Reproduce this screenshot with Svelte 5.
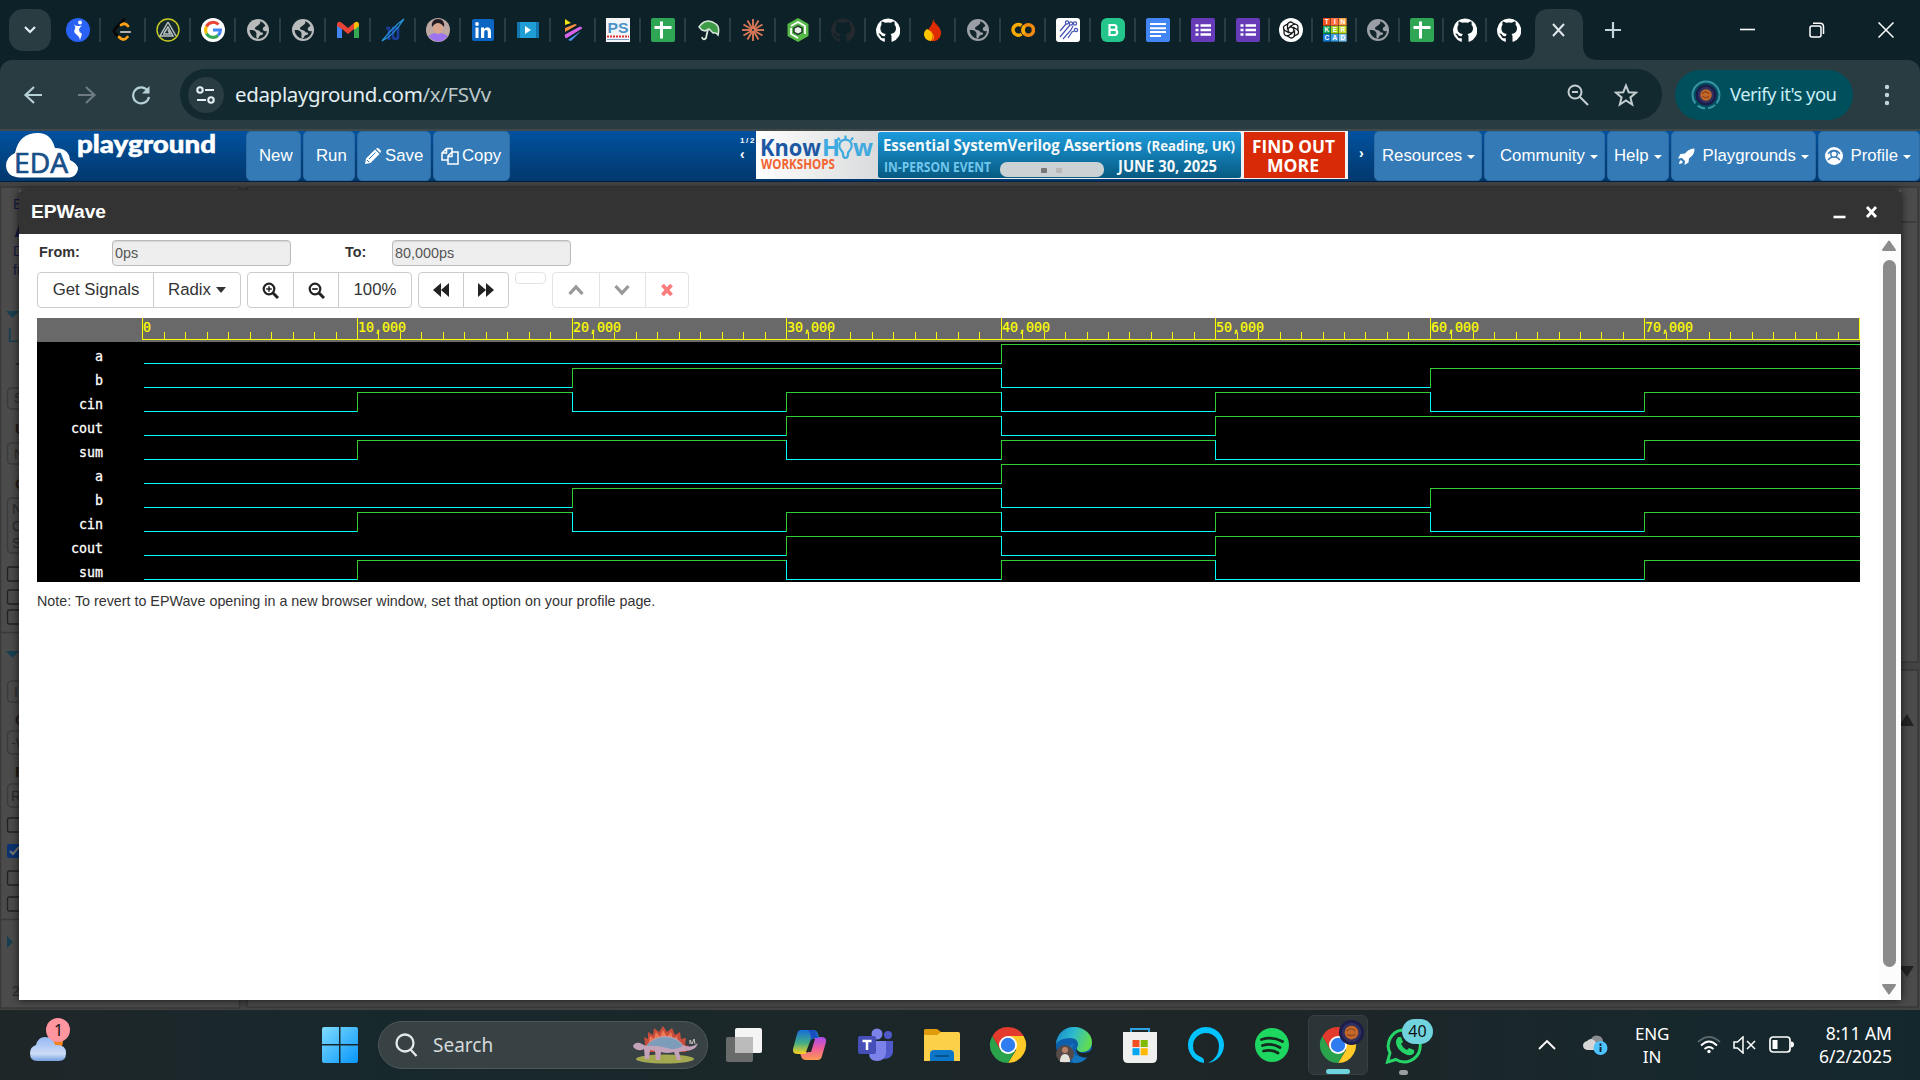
<script>
  const tabs = ['swoosh', 'leet', 'tri', 'google', 'globe', 'globe', 'gmail', 'ten', 'face', 'linkedin', 'video', 'stripes', 'ps', 'sheet', 'umbrella', 'burst', 'hex', 'ghdark', 'github', 'flame', 'globe2', 'colab', 'circuit', 'bold', 'docs', 'forms', 'forms', 'gpt', 'tinker', 'globe2', 'sheet', 'github', 'github'];

  // Each signal starts low and toggles at the listed periods.
  const group = [
    { name: 'a', at: [4] },
    { name: 'b', at: [2, 4, 6] },
    { name: 'cin', at: [1, 2, 3, 4, 5, 6, 7] },
    { name: 'cout', at: [3, 4, 5] },
    { name: 'sum', at: [1, 3, 4, 5, 7] }
  ];
  const signals = [...group, ...group];
  const originX = 105.4;
  const period = 214.57;
  const px = (t) => Math.round(originX + t * period) + 0.5;

  function segments(signal, row) {
    const hi = 24 + row * 24 + 2.5;
    const lo = hi + 19;
    const edges = [0, ...signal.at, 8];
    const out = [];
    for (let i = 0; i < edges.length - 1; i++) {
      const high = i % 2 === 1;
      const y = high ? hi : lo;
      const x1 = i === 0 ? px(0) + 1.5 : px(edges[i]);
      if (i > 0) out.push({ high, d: `M${x1} ${hi - 0.5}V${lo + 0.5}` });
      out.push({ high, d: `M${x1} ${y}H${px(edges[i + 1])}` });
    }
    return out;
  }
  const waves = signals.flatMap(segments);
  const majors = [0, 1, 2, 3, 4, 5, 6, 7];
  const ticks = Array.from({ length: 80 }, (_, i) => i / 10).filter((t) => t % 1 !== 0);
  const rays = Array.from({ length: 12 }, (_, i) => i * 30);
  const petals = [0, 60, 120, 180, 240, 300];
  const tinkerRows = [
    { y: 0, text: 'TIN', c: ['#f4511e', '#ff7043', '#ff9f43'] },
    { y: 8, text: 'KER', c: ['#16a35a', '#9ccc1c', '#c0d62c'] },
    { y: 16, text: 'CAD', c: ['#1477d1', '#3f9be0', '#86c5ee'] }
  ];
</script>

{#snippet chrome()}
  <path fill="#ffc928" d="M18 9h15.600A18 18 0 0 1 18 36l8-13z" />
  <path fill="#2ba24c" d="M2.400 9A18 18 0 0 0 18 36l8-13.500-15.800 0z" />
  <path fill="#e33b2e" d="M2.400 9A18 18 0 0 1 33.600 9H18L10.200 22.500z" />
  <circle cx="18" cy="18" r="9" fill="#fff" /><circle cx="18" cy="18" r="7.200" fill="#2f7cf0" />
{/snippet}

{#snippet planet(r)}
  <circle r={r} fill="#1b1c4b" /><circle r={r * 0.78} fill="#30305f" />
  <circle r={r * 0.55} fill="#c4682a" /><path d="M{-r * 0.4} {-r * 0.1}q{r * 0.4} {-r * 0.4} {r * 0.7} 0M{-r * 0.35} {r * 0.15}q{r * 0.4} {r * 0.2} {r * 0.65} 0" stroke="#8a431b" stroke-width="1.200" fill="none" />
{/snippet}

{#snippet favicon(name)}
  <svg class="fav" viewBox="0 0 24 24">
    {#if name === 'swoosh'}
      <circle cx="12" cy="12" r="12" fill="#2962f5" />
      <circle cx="14" cy="4.500" r="2" fill="#fff" /><path d="M8 6.500q2.500 2.500 8 1-3 2.500-3 4.500t3 4l-2 6q-1-4-4-6t-1-5q1-2-1-4.500z" fill="#fff" />
    {:else if name === 'leet'}
      <path d="M13 1.500 4 11q-2 2 0 4l3 3.500" fill="none" stroke="#080808" stroke-width="2.800" stroke-linecap="round" />
      <path d="M10 7q4-3 7 1M8 19q4.500 5 8.500 0" fill="none" stroke="#ffa116" stroke-width="2.800" stroke-linecap="round" />
      <path d="M10 14h9" stroke="#b3b3b3" stroke-width="2.200" stroke-linecap="round" />
    {:else if name === 'tri'}
      <circle cx="12" cy="12" r="11" fill="#15282c" stroke="#c9cc22" stroke-width="1.400" />
      <path d="M12 4 4 18h13L12 9l-4 6M12 4l8 14M12 12l2 4H7" fill="none" stroke="#b9c1c2" stroke-width="1.500" />
    {:else if name === 'google'}
      <circle cx="12" cy="12" r="12" fill="#fff" />
      <path d="M17.500 6.500A7.500 7.500 0 0 0 5.500 8.500" fill="none" stroke="#ea4335" stroke-width="3" />
      <path d="M5.500 8.500a7.500 7.500 0 0 0 0 7" fill="none" stroke="#fbbc05" stroke-width="3" />
      <path d="M5.500 15.500a7.500 7.500 0 0 0 11.500 2" fill="none" stroke="#34a853" stroke-width="3" />
      <path d="M17 17.500a7.500 7.500 0 0 0 2.500-5.500H12" fill="none" stroke="#4285f4" stroke-width="3" />
    {:else if name === 'globe' || name === 'globe2'}
      <circle cx="12" cy="12" r="11" fill={name === 'globe' ? '#b9babb' : '#9aa0a6'} />
      <path d="M14 3.500c1 2-1 3-2 4s-3 1-3 3 4 1 5 3 3 0 3 2-2 1-3 2-1 2-2 3A8.600 8.600 0 0 1 3.600 12h3q4 1 4 4-1 3 1 5h1a9 9 0 0 0 8.400-8c-3 1-5-1-4-3s3-1 2-3a9 9 0 0 0-4-3.500z" fill="#13262b" />
    {:else if name === 'gmail'}
      <path d="M1 20V7l5 4v9z" fill="#4285f4" /><path d="M18 20v-9l5-4v13z" fill="#34a853" />
      <path d="M1 8V6q1-4 5-1l6 5 6-5v6l-6 5-6-5-5-3z" fill="#ea4335" /><path d="M18 5q4-3 5 1v2l-5 4z" fill="#fbbc05" />
    {:else if name === 'ten'}
      <path d="M5 10h3v12M12 10h5v9q0 3-5 1z" fill="none" stroke="#1a3d9c" stroke-width="2.600" /><path d="M1 23Q12 18 23 1 12 9 1 23z" stroke="#2794da" fill="none" stroke-width="1.300" />
    {:else if name === 'face'}
      <circle cx="12" cy="12" r="12" fill="#bda9a2" /><path d="M2 18q10-7 20 0-9 11-20 0z" fill="#9b74ee" /><ellipse cx="12" cy="10" rx="5" ry="6" fill="#d9a78f" /><path d="M6 9q-1-8 6-8t6 8q-3-4-6-4T6 9z" fill="#231c22" />
    {:else if name === 'linkedin'}
      <rect x="1" y="1" width="22" height="22" rx="2" fill="#0a66c2" />
      <path d="M4.500 9.500h3V20h-3zM10 9.500h3v1.500q3-3 5.500-1 1.500 1 1.500 4v6h-3.200v-6q0-2-1.800-2t-1.800 2v6H10z" fill="#fff" /><circle cx="6" cy="6" r="1.900" fill="#fff" />
    {:else if name === 'video'}
      <path d="M1 4h22v16H1z" fill="#1377ad" /><path d="M4 4h16v16H4z" fill="#1f9ed5" /><path d="M9 8v8l6-4z" fill="#fff" />
    {:else if name === 'stripes'}
      <path d="M4 1v6l6-2z" fill="#f4e313" /><path d="M4 10 14 6l2 1L4 14z" fill="#ff9042" /><path d="m4 17 15-8 2 1L5 20z" fill="#d765ec" stroke="#d765ec" /><path d="m7 22 13-9-10 10z" fill="#4a98f5" />
    {:else if name === 'ps'}
      <rect width="24" height="24" fill="#f3f5f8" /><text x="12" y="14.500" text-anchor="middle" textLength="21" lengthAdjust="spacingAndGlyphs" class="ps">PS</text><path d="M1 18.500h22" stroke="#e03232" stroke-width="2" stroke-dasharray="2 1" /><path d="M1 21.500h22" stroke="#7d9fc6" />
    {:else if name === 'sheet'}
      <rect width="24" height="24" rx="2" fill="#2fa653" /><path d="M3.500 9.500h17M10.500 3.500v17" stroke="#fff" stroke-width="3" />
    {:else if name === 'umbrella'}
      <path d="M3 9q7-10 17-3 4 3 2 11-2-3-5-2l-4-4-4 2-3-1z" fill="#3d9b46" stroke="#dce9dc" stroke-width="1.500" /><path d="m12 11-2 9q-3 3-4-1" fill="none" stroke="#dce9dc" stroke-width="1.800" />
    {:else if name === 'burst'}
      {#each rays as r}<path d="M12 11V1" stroke="#d97757" stroke-width="1.900" transform="rotate({r} 12 12)" />{/each}
    {:else if name === 'hex'}
      <path d="m12 0 10.500 6v12L12 24 1.500 18V6z" fill="#57b947" /><path d="m5 8 7-4 7 4v8M5 10v6l7 4" fill="none" stroke="#fff" stroke-width="1.800" /><path d="m12 8 4 2.200v4.200L12 16.500 8 14.400v-4.200z" fill="#e9efe9" stroke="#20372c" stroke-width="1.500" />
    {:else if name === 'github' || name === 'ghdark'}
      <path fill={name === 'github' ? '#fff' : '#24292e'} d="M12 .5a12 12 0 0 0-4 23.300c.6.100.8-.3.800-.6v-3c-3 .6-4-.9-4.400-2-.3-.7-1-1.600-1.600-2-.5-.3-.3-.7.300-.7 1.400 0 2.100 1.500 2.600 2 1 1 2.300.8 3.200.4.100-.8.500-1.500 1-1.900-3-.4-5.500-1.500-5.500-6q0-2 1.200-3.200-.5-1.500.1-3.200c1 0 2.300.6 3.300 1.200q3-.8 6 0c1-.7 2.300-1.200 3.300-1.200q.7 1.700.2 3.200Q20 8 20 10c0 4.500-2.700 5.600-5.500 6 .7.600 1 1.500 1 2.600v4.600c0 .3.200.7.800.6A12 12 0 0 0 12 .5z" />
    {:else if name === 'flame'}
      <path d="M12 1c1 5 9 8 8 15-1 5-5 8-9 7-4-1-5-5-4-10 1-4 5-6 5-12z" fill="#dd2c00" /><path d="M6 11c4 2 8 5 4 12-4 0-7-3-7-7 0-2 1-4 3-5z" fill="#ffc400" /><path d="M8 12q6 5 3 11c2-1 3-4 1-7q-1-3-4-4z" fill="#ff9100" />
    {:else if name === 'colab'}
      <g fill="none" stroke-width="3.600"><path d="M10.500 7.600a5.300 5.300 0 1 0 0 8.500" stroke="#f9ab00" /><circle cx="17.300" cy="12" r="5.200" stroke="#f08a10" /><path d="M13.500 8.300a5.200 5.200 0 0 0 0 7.400" stroke="#f9ab00" /></g>
    {:else if name === 'circuit'}
      <rect width="24" height="24" rx="3" fill="#fff" /><g fill="none" stroke="#4451b5" stroke-width="1.200"><path d="m4 13 6-7M4 19 14 7M7 21l8-9 2-4M12 20l4-6 2-1" /><circle cx="11" cy="4.500" r="1.600" /><circle cx="15" cy="5.500" r="1.600" /><circle cx="19" cy="5.500" r="1.600" /><circle cx="20" cy="12" r="1.600" /></g>
    {:else if name === 'bold'}
      <rect width="24" height="24" rx="6" fill="#25c68b" /><path d="M8.500 7h4.500q2.500 0 2.500 2.400T13 11.800H8.500zM8.500 11.800h5q2.700 0 2.700 2.500T13.500 17h-5z" fill="none" stroke="#fff" stroke-width="2.200" />
    {:else if name === 'docs'}
      <rect width="24" height="24" rx="2" fill="#4285f4" /><path d="M4 6h16M4 10.200h16M4 14h16M4 18h11" stroke="#fff" stroke-width="2.100" />
    {:else if name === 'forms'}
      <rect width="24" height="24" rx="2" fill="#673ab7" /><path d="M4.500 7.500h3M4.500 12h3M4.500 16.500h3M9.500 7.500H20M9.500 12H20M9.500 16.500H20" stroke="#fff" stroke-width="2.500" />
    {:else if name === 'gpt'}
      <circle cx="12" cy="12" r="12" fill="#fff" /><g fill="none" stroke="#161616" stroke-width="1.300">{#each petals as r}<path d="M12 8.800 8.500 10.800V7a3 3 0 0 1 5-2.200l2.500 1.700" transform="rotate({r} 12 12)" />{/each}</g>
    {:else if name === 'tinker'}
      {#each tinkerRows as row}
        {#each row.c as c, i}
          <rect x={i * 8} y={row.y} width="7.600" height="7.600" fill={c} /><text x={i * 8 + 3.800} y={row.y + 6.300} text-anchor="middle" class="tk">{row.text[i]}</text>
        {/each}
      {/each}
    {/if}
  </svg>
{/snippet}

<div class="screen">
  <div class="tabstrip">
    <div class="tabsearch"><svg width="14" height="10" viewBox="0 0 14 10"><path d="m2 2 5 5 5-5" fill="none" stroke="#e3eff2" stroke-width="2.200" /></svg></div>
    {#each tabs as t, i}
      <div class="tab" class:narrow={i > 26} class:step={i === 26} class:last={i === 32}>{@render favicon(t)}</div>
    {/each}
    <div class="active">
      <svg width="78" height="51" viewBox="0 0 78 51"><path fill="#283c42" d="M0 51q15 0 15-15V14Q15 0 29 0h20q14 0 14 14v22q0 15 15 15z" /><path d="m33 15 11 12m0-12L33 27" stroke="#dfe9ec" stroke-width="2" /></svg>
    </div>
    <svg class="plus" width="16" height="16" viewBox="0 0 16 16"><path d="M8 0v16M0 8h16" stroke="#c2d5da" stroke-width="2.200" /></svg>
    <div class="wincontrols">
      <svg width="16" height="16" viewBox="0 0 16 16"><path d="M0 7.500h15" stroke="#fff" stroke-width="1.600" /></svg>
      <svg width="16" height="16" viewBox="0 0 16 16" fill="none" stroke="#fff" stroke-width="1.500"><rect x="1" y="4" width="11" height="11" rx="2" /><path d="M4 1.300h7q3.500 0 3.500 3.500V12" /></svg>
      <svg width="16" height="16" viewBox="0 0 16 16"><path d="m.5.5 15 15m0-15-15 15" stroke="#fff" stroke-width="1.500" /></svg>
    </div>
  </div>

  <div class="toolbar">
    <div class="nav">
      <svg width="20" height="20" viewBox="0 0 20 20"><path d="M19 10H3m8-8-8.500 8 8.500 8" fill="none" stroke="#b5d0d7" stroke-width="2.200" /></svg>
      <svg width="20" height="20" viewBox="0 0 20 20"><path d="M1 10h16M9 2l8.500 8L9 18" fill="none" stroke="#6f7d81" stroke-width="2.200" /></svg>
      <svg width="20" height="20" viewBox="0 0 20 20"><path d="M16.500 5.500A8 8 0 1 0 18 12" fill="none" stroke="#b5d0d7" stroke-width="2.200" /><path d="M18.500 1v7.500H11z" fill="#b5d0d7" /></svg>
    </div>
    <div class="omnibox">
      <div class="siteinfo"><svg width="20" height="18" viewBox="0 0 20 18" fill="none" stroke="#e3eff2" stroke-width="2.100"><circle cx="4" cy="4" r="2.700" /><path d="M9 4h9M1 14h9" /><circle cx="15" cy="14" r="2.700" /></svg></div>
      <span class="url">edaplayground.com<i>/x/FSVv</i></span>
      <svg class="mag" width="22" height="22" viewBox="0 0 22 22" fill="none" stroke="#c4ced1" stroke-width="2"><circle cx="8" cy="8" r="6.500" /><path d="m12.500 12.500 8.500 8.500M5 8h6" /></svg>
      <svg width="24" height="24" viewBox="0 0 24 24" fill="none" stroke="#c4ced1" stroke-width="2"><path d="m12 2.500 2.700 6.700 7.300.5-5.600 4.700 1.800 7.100-6.200-4-6.200 4 1.800-7.100L2 9.700l7.300-.5z" /></svg>
    </div>
    <div class="verify">
      <svg width="30" height="30" viewBox="-15 -15 30 30"><circle r="13.500" fill="none" stroke="#3a94a5" stroke-width="2" stroke-dasharray="9 2 8 3 8 3 51" />{@render planet(10.5)}</svg>
      <span>Verify it's you</span>
    </div>
    <svg width="6" height="22" viewBox="0 0 6 22" fill="#c2d5da"><circle cx="3" cy="3" r="2.200" /><circle cx="3" cy="11" r="2.200" /><circle cx="3" cy="19" r="2.200" /></svg>
  </div>

  <header class="eda">
    <svg class="logo" width="246" height="50" viewBox="0 0 246 50">
      <path fill="#fff" d="M20 46.500Q7 46 6 35q0-9 9-13Q19 2 38 2q13 0 17 15 14 0 15 12 8 4 8 9-1 7-8 8.500z" />
      <text x="14" y="42" textLength="54" lengthAdjust="spacingAndGlyphs" class="logo-eda">EDA</text>
      <text x="77" y="21.500" textLength="139" lengthAdjust="spacingAndGlyphs" class="logo-play">playground</text>
    </svg>
    <div class="btns">
      <button class="b-new">New</button><button class="b-run">Run</button>
      <button class="b-save"><svg width="16" height="16" viewBox="0 0 16 16" fill="#fff"><path d="m0 16 1-5.500L10 1.500 14.500 6l-9 9zM11 .8q1.500-1.500 3 0l1.200 1.200q1.500 1.500 0 3z" /><path d="m2 12 2.200 2.200M4 11l6.500-6.500" stroke="#337ab7" /></svg>Save</button>
      <button class="b-copy"><svg width="18" height="18" viewBox="0 0 18 18" fill="none" stroke="#fff" stroke-width="1.500"><path d="M6.500 13H1V6l4.500-4.500H11V5M1 6h4.500V1.500M7 9l4-4h6v12H7zM7 9.500h4V5" /></svg>Copy</button>
    </div>
    <div class="prev"><span>1 / 2</span><b>‹</b></div>
    <svg class="banner" width="592" height="48" viewBox="0 0 592 48">
      <defs>
        <linearGradient id="bb" x1="0" y1="0" x2="0" y2="1"><stop offset="0" stop-color="#1c9bdc" /><stop offset="1" stop-color="#075a82" /></linearGradient>
        <linearGradient id="bg" x1="0" y1="0" x2="1" y2="0"><stop offset="0" stop-color="#fff" /><stop offset="1" stop-color="#d9dadb" /></linearGradient>
      </defs>
      <rect width="592" height="48" fill="#f1f1f1" /><rect width="122" height="48" fill="url(#bg)" />
      <text x="4" y="24.500" textLength="61" lengthAdjust="spacingAndGlyphs" class="know" fill="#1d58a5">Know</text>
      <text x="66" y="24.500" textLength="18" lengthAdjust="spacingAndGlyphs" class="know" fill="#3eaadf">H</text>
      <path d="M87 23q0-2-2-4a6.200 6.200 0 1 1 9 0q-2 2-2 4 0 4-2.500 4T87 23zM89.500 4.500v3.500M82 6.500l2 3M97 6.500l-2 3" fill="none" stroke="#3eaadf" stroke-width="2.200" />
      <text x="97" y="24.500" textLength="20" lengthAdjust="spacingAndGlyphs" class="know" fill="#3eaadf">w</text>
      <text x="5" y="37.500" textLength="74" lengthAdjust="spacingAndGlyphs" class="wk">WORKSHOPS</text>
      <rect x="122" y="1" width="363" height="46" rx="2" fill="url(#bb)" />
      <text x="127" y="20" textLength="259" lengthAdjust="spacingAndGlyphs" class="b1">Essential SystemVerilog Assertions</text>
      <text x="391" y="20" textLength="88" lengthAdjust="spacingAndGlyphs" class="b2">(Reading, UK)</text>
      <text x="128" y="41" textLength="107" lengthAdjust="spacingAndGlyphs" class="b3">IN-PERSON EVENT</text>
      <text x="362" y="41" textLength="99" lengthAdjust="spacingAndGlyphs" class="b1">JUNE 30, 2025</text>
      <rect x="244" y="31" width="104" height="15" rx="7" fill="#ccd1d3" /><rect x="285" y="37" width="6" height="5" rx="1" fill="#777" /><rect x="300" y="37" width="6" height="5" rx="1" fill="#b8b8b8" />
      <rect x="488" y="1" width="101" height="46" fill="#d82a06" />
      <text x="496" y="22" textLength="83" lengthAdjust="spacingAndGlyphs" class="b4">FIND OUT</text><text x="511" y="41" textLength="52" lengthAdjust="spacingAndGlyphs" class="b4">MORE</text>
    </svg>
    <div class="next">›</div>
    <div class="btns">
      <button class="r1">Resources<em></em></button><button class="r2">Community<em></em></button><button class="r3">Help<em></em></button>
      <button class="r4"><svg width="17" height="17" viewBox="0 0 17 17" fill="#fff"><path d="M16.500.5q.5 6-5.500 10l-.5 4-4 2.500.5-4-3-3L0 10.500 2.500 6 7 5.500q4-5 9.500-5zM3 12l2 2q-1 2-4 2 0-3 2-4z" /></svg><span>Playgrounds</span><em></em></button>
      <button class="r5"><svg width="18" height="18" viewBox="0 0 18 18"><circle cx="9" cy="9" r="9" fill="#fff" /><circle cx="9" cy="7" r="3.200" fill="#fff" stroke="#337ab7" stroke-width="1.400" /><path d="M3.200 13q2-3 3.800-2.500M14.800 13q-2-3-3.800-2.500M3.200 7a6.500 6.500 0 0 1 11.600 0" fill="none" stroke="#337ab7" stroke-width="1.600" /></svg><span>Profile</span><em></em></button>
    </div>
  </header>

  <main class="page">
    <svg class="backdrop" width="1920" height="828" viewBox="0 182 1920 828">
      <rect y="182" width="1920" height="828" fill="#434343" />
      <g fill="#4b4b4b" stroke="#393939" stroke-width="1.500"><rect x=".5" y="187" width="239" height="821" /><rect x="247" y="187" width="1671" height="475" /><rect x="247" y="670" width="1671" height="337" /></g>
      <path d="M1890 222h26M0 632.500h40M0 919.500h40" stroke="#393939" stroke-width="1.500" />
      <g class="dimtext" fill="#151a3e"><text x="13" y="209">E</text><text x="14" y="237" class="big">A</text><text x="13" y="256">D</text><text x="13" y="275">fr</text></g>
      <g fill="#183f50"><path d="M6 311h13l-6.500 7zM6 651h13l-6.500 7zM7 936v12l6-6z" /><text x="7" y="342" class="lang">L</text></g>
      <g fill="none" stroke="#3b3b3b" stroke-width="1.400"><rect x="7.500" y="388" width="100" height="21" rx="4" /><rect x="7.500" y="443" width="100" height="21" rx="4" /><rect x="7.500" y="498" width="100" height="55" rx="4" /><rect x="7.500" y="681" width="100" height="21" rx="4" /><rect x="7.500" y="731" width="100" height="23" rx="4" /><rect x="7.500" y="784" width="100" height="23" rx="4" /></g>
      <g fill="none" stroke="#222" stroke-width="1.300">{#each [567, 590, 610, 818, 871, 897] as y}<rect x="7.500" {y} width="14" height="14" rx="2" />{/each}</g>
      <rect x="7" y="844" width="14" height="14" rx="2" fill="#0a3370" /><path d="m10 851 3 3 6-7" fill="none" stroke="#777" stroke-width="2" />
      <g class="dimtext" fill="#2a2a2a"><text x="14" y="403">S</text><text x="14" y="459">N</text><text x="12" y="514">N</text><text x="12" y="531">O</text><text x="12" y="548">S</text><text x="14" y="697">I</text><text x="11" y="748">-W</text><text x="11" y="801">R</text><text x="12" y="996">2</text></g>
      <g class="dimbold" fill="#251c18"><text x="16" y="373">T</text><text x="15" y="434">U</text><text x="15" y="489">O</text><text x="15" y="725">C</text><text x="15" y="777">R</text></g>
      <path d="m1899 726 8-12 7 12zM1899 966h15l-7 11z" fill="#222" />
    </svg>

    <section class="modal">
      <div class="mhead"><h1>EPWave</h1><svg width="46" height="16" viewBox="0 0 46 16" stroke="#fff" fill="none"><path d="M.5 13h12" stroke-width="2.600" /><path d="m34 3 9 10m0-10-9 10" stroke-width="2.800" /></svg></div>
      <div class="mbody">
        <div class="content">
          <div class="range"><label class="from" for="f">From:</label><div id="f" class="input">0ps</div><label class="to" for="t">To:</label><div id="t" class="input">80,000ps</div></div>
          <div class="tools">
            <div class="group g1"><span>Get Signals</span><span>Radix<em></em></span></div>
            <div class="group g2">
              <span><svg width="17" height="17" viewBox="0 0 17 17" fill="none" stroke="#222"><circle cx="7" cy="7" r="5.300" stroke-width="2.200" /><path d="m11 11 5 5" stroke-width="3" /><path d="M7 4.200v5.600M4.200 7h5.600" stroke-width="1.500" /></svg></span>
              <span><svg width="17" height="17" viewBox="0 0 17 17" fill="none" stroke="#222"><circle cx="7" cy="7" r="5.300" stroke-width="2.200" /><path d="m11 11 5 5" stroke-width="3" /><path d="M4.200 7h5.600" stroke-width="1.700" /></svg></span>
              <span>100%</span>
            </div>
            <div class="group g3">
              <span><svg width="16" height="14" viewBox="0 0 16 14" fill="#222"><path d="M8 0v14L0 7zM16 0v14L8 7z" /></svg></span>
              <span><svg width="16" height="14" viewBox="0 0 16 14" fill="#222"><path d="M0 0v14l8-7zM8 0v14l8-7z" /></svg></span>
            </div>
            <div class="empty"></div>
            <div class="group g4">
              <span><svg width="16" height="12" viewBox="0 0 16 12"><path d="m1.500 10 6.500-7 6.500 7" fill="none" stroke="#999" stroke-width="3.300" /></svg></span>
              <span><svg width="16" height="12" viewBox="0 0 16 12"><path d="m1.500 2 6.500 7 6.500-7" fill="none" stroke="#999" stroke-width="3.300" /></svg></span>
              <span><svg width="12" height="12" viewBox="0 0 12 12"><path d="m1.500 1 9 10m0-10-9 10" stroke="#fb7c7c" stroke-width="3.800" /></svg></span>
            </div>
          </div>
          <svg class="wave" width="1823" height="264" viewBox="0 0 1823 264">
            <rect width="1823" height="264" fill="#000" /><rect width="1823" height="24" fill="#696969" />
            <g stroke="#ff0" shape-rendering="crispEdges">
              <path d="M105 21.500H1823M1822.500 0v22" />
              {#each majors as t}<path d="M{px(t)} 0v22" />{/each}
              {#each ticks as t}<path d="M{px(t)} 14v8" />{/each}
            </g>
            {#each majors as t}<text x={px(t) + 0.5} y="14" class="tick">{t ? t + '0,000' : '0'}</text>{/each}
            {#each signals as s, i}<text x="66" y={42.6 + i * 24} text-anchor="end" class="sig">{s.name}</text>{/each}
            {#each waves as w}<path d={w.d} stroke={w.high ? '#32cd32' : '#00ffff'} shape-rendering="crispEdges" />{/each}
          </svg>
          <p>Note: To revert to EPWave opening in a new browser window, set that option on your profile page.</p>
        </div>
        <div class="scroll">
          <svg width="16" height="12" viewBox="0 0 16 12"><path d="m8 1.500 6 8.500H2z" fill="#8b8b8b" stroke="#8b8b8b" stroke-width="2" stroke-linejoin="round" /></svg>
          <div class="thumb"></div>
          <svg width="16" height="12" viewBox="0 0 16 12"><path d="M8 10.500 2 2h12z" fill="#8b8b8b" stroke="#8b8b8b" stroke-width="2" stroke-linejoin="round" /></svg>
        </div>
      </div>
    </section>
  </main>

  <footer class="taskbar">
    <div class="weather">
      <svg width="44" height="46" viewBox="0 0 44 46"><defs><linearGradient id="cl" x1="0" y1="0" x2="0" y2="1"><stop offset="0" stop-color="#94b7f3" /><stop offset=".7" stop-color="#ccdcf7" /><stop offset="1" stop-color="#769fe0" /></linearGradient></defs>
        <circle cx="27" cy="24" r="8" fill="#f58220" /><path d="M9 43q-7 0-7-8 0-6 6-8 2-8 9-8 8 0 10 8 11-1 11 8 0 8-7 8z" fill="url(#cl)" />
        <circle cx="30" cy="12" r="12" fill="#ff959e" /><text x="30.500" y="17.500" text-anchor="middle" class="badge1">1</text></svg>
    </div>
    <svg class="start" width="36" height="36" viewBox="0 0 36 36"><defs><linearGradient id="ws" x1="0" y1="0" x2="1" y2="1"><stop offset="0" stop-color="#7fdcff" /><stop offset="1" stop-color="#0795fa" /></linearGradient></defs><path fill="url(#ws)" d="M2 0h15v17H0V2q0-2 2-2zM18.500 0H34q2 0 2 2v15H18.500zM0 18.500h17V36H2q-2 0-2-2zM18.500 18.500H36V34q0 2-2 2H18.500z" /></svg>
    <div class="search">
      <svg width="23" height="24" viewBox="0 0 23 24" fill="none" stroke="#e5e9ea" stroke-width="2.300"><circle cx="10" cy="10" r="8.500" /><path d="m15.500 16.500 6 6.500" /></svg>
      <span>Search</span>
      <svg class="dino" width="68" height="38" viewBox="0 0 68 38">
        <ellipse cx="33" cy="33" rx="29" ry="4.500" fill="#a4a851" />
        <path d="m13 17-1-6 4 2 0-7 5 3 1-7 5 4 4-6 4 6 5-4 3 7 5-3 1 7 5-1-1 7 4 1-3 6H13z" fill="#c84d3c" /><path d="m17 16 1-6 4 3 2-7 4 5 3-7 4 7 4-5 2 7 4-3 1 7 3-1 0 6H17z" fill="#ed7b55" />
        <path d="M1 20q2-4 7-3l6 3q8-10 20-10 12 1 17 9 8 4 15-2-2 8-14 8l-5 1 2 8h-4l-3-8q-7 2-13 0l-1 8h-4l-1-9-5-1-1 9h-4l-1-10q-5 3-10-1z" fill="#c4a2b9" />
        <path d="M14 20q8-9 20-9 12 1 17 9-8 5-16 2-10-3-21-2z" fill="#7d9cb9" /><path d="m58 18 0-4 2 4 2-5 1 5" fill="none" stroke="#c9c3bd" />
      </svg>
    </div>
    <div class="apps">
      <div class="app"><svg viewBox="0 0 36 36"><rect x="9" y="1" width="27" height="25" rx="2" fill="#f4f4f4" /><rect y="10" width="27" height="25" rx="2" fill="#696b6b" /><path d="M9 10h18v16H9z" fill="#bababa" /></svg></div>
      <div class="app"><svg viewBox="0 0 36 36"><defs><linearGradient id="cp" x1="0" y1="0" x2="0" y2="1"><stop offset="0" stop-color="#176ddb" /><stop offset=".55" stop-color="#45ae83" /><stop offset="1" stop-color="#fbd21d" /></linearGradient><linearGradient id="cq" x1="0" y1="0" x2="0" y2="1"><stop offset="0" stop-color="#a74cf0" /><stop offset=".5" stop-color="#ef5e98" /><stop offset="1" stop-color="#fd9a52" /></linearGradient></defs>
        <path d="M26 33H14q-4 0-5-4l-1-3h5q4 0 5-4l3-8q1-4 5-4h3q6 0 5 5l-4 14q-1 4-4 4z" fill="url(#cq)" /><path d="M9 3h12q4 0 5 4l1 4h-3q-4 0-5 4l-3 8q-1 4-5 4H6q-6 0-5-5L5 7q1-4 4-4z" fill="url(#cp)" /><path d="M19 12h4l-4 13h-5z" fill="#1c2527" /><path d="M20 3q4 0 5 4l1 4h-3q-3 0-4 3 0-8-3-11z" fill="#1a4fc0" /></svg></div>
      <div class="app"><svg viewBox="0 0 36 36"><circle cx="19" cy="7" r="5.500" fill="#7b83eb" /><circle cx="30" cy="8" r="4" fill="#5059c9" /><path d="M25 14h10v11q-1 7-9 7z" fill="#5059c9" /><path d="M11 14h17v12q-1 8-9 8t-8-8z" fill="#7b83eb" /><rect y="9" width="18" height="18" rx="2" fill="#464eb8" /><path d="M4.500 14h9M9 14v9" stroke="#fff" stroke-width="2.500" /></svg></div>
      <div class="app"><svg viewBox="0 0 36 36"><path d="M0 3q0-1 2-1h11l4 3h18l1 5H0z" fill="#df9b0b" /><path d="M0 8h13l4-3h17q2 0 2 2v27H0z" fill="#fdd04a" /><path d="M6 34v-7q0-4 4-4h16q4 0 4 4v7z" fill="#0c76c9" /><path d="M11 29h14" stroke="#07518f" stroke-width="2" /></svg></div>
      <div class="app"><svg viewBox="0 0 36 36">{@render chrome()}</svg></div>
      <div class="app"><svg viewBox="0 0 36 36"><defs><linearGradient id="ed" x1="0" y1="0" x2="1" y2=".3"><stop offset="0" stop-color="#1683c8" /><stop offset=".5" stop-color="#2cb9d0" /><stop offset="1" stop-color="#5fdb55" /></linearGradient></defs><circle cx="18" cy="18" r="18" fill="#0d5fab" /><path d="M0 17C1 6 9 0 18 0c10 0 18 7 18 15 0 7-5 10-10 10-4 0-6-2-5-4 3-6-1-10-7-10Q4 11 0 17z" fill="url(#ed)" /><path d="M18 16q-5 12 6 14 5 1 9-2-6 9-15 8-9-7-6-16z" fill="#1575be" /><path d="M20 21q2 5 8 5 4 0 8-3l0-4 2 7-5 4q-4 1-7 0-6-2-6-9z" fill="#1c2426" /><circle cx="9" cy="27" r="9" fill="#554a48" /><path d="M4 35q0-8 5-8t5 8z" fill="#e4e0da" /><circle cx="9" cy="23" r="3" fill="#b8826a" /></svg></div>
      <div class="app"><svg viewBox="0 0 36 36"><path d="M9 6V2h18v4" fill="none" stroke="#2ba3e5" stroke-width="2" /><path d="M1 5h34v26q0 5-5 5H6q-5 0-5-5z" fill="#efefef" /><path d="M10.500 13h7v7h-7z" fill="#f25022" /><path d="M18.700 13h7v7h-7z" fill="#7fba00" /><path d="M10.500 21.200h7v7h-7z" fill="#00a4ef" /><path d="M18.700 21.200h7v7h-7z" fill="#ffb900" /></svg></div>
      <div class="app"><svg viewBox="0 0 36 36"><path fill-rule="evenodd" fill="#00c3ff" d="M16 35.900A18 18 0 1 1 20 35.900q11-5 11-17a13 13 0 0 0-26 0q0 8 8 11 3 1 3 4z" /></svg></div>
      <div class="app"><svg viewBox="0 0 36 36"><circle cx="18" cy="18" r="17" fill="#1ed760" /><path d="M7.500 12.500q11-3.500 21 2M8.500 18.500q9-3 17.500 2M9.500 24q8-2 14.500 2" fill="none" stroke="#16291e" stroke-width="2.800" stroke-linecap="round" /></svg></div>
      <div class="app on"><svg viewBox="0 0 36 36">{@render chrome()}<g transform="translate(31.500 5.500)">{@render planet(12.5)}</g></svg><b class="bar"></b></div>
      <div class="app"><svg viewBox="0 0 36 36"><path d="m1.500 35 2.500-9a16 16 0 1 1 6 6.500z" fill="none" stroke="#25d366" stroke-width="3" /><path d="M12 10h3l2 5-2 2q2 4 6 6l2-2 5 2v3q-3 4-9 1-8-4-9-11 0-4 2-6z" fill="#25d366" /></svg><b class="count">40</b><b class="bar dot"></b></div>
    </div>
    <div class="tray">
      <svg width="18" height="11" viewBox="0 0 18 11"><path d="m1 10 8-8 8 8" fill="none" stroke="#fff" stroke-width="1.900" /></svg>
      <svg class="cloud" width="25" height="22" viewBox="0 0 25 22"><path d="M7 7q3-7 9-5 4 1 4 6 3 1 3 4H7z" fill="#8b8d8e" /><path d="M4 16q-4-1-4-4.500T4 7q4-4 8 0l4 9z" fill="#d5d5d5" /><circle cx="17.500" cy="14" r="7" fill="#4cc2ff" /><path d="M17.500 13v5M17.500 9.500V12" stroke="#123" stroke-width="1.900" /></svg>
      <div class="lang2"><span>ENG</span><span>IN</span></div>
      <svg class="wifi" width="24" height="18" viewBox="0 0 24 18" fill="none" stroke="#fff" stroke-width="1.800"><path d="M1 6q11-10 22 0" stroke="#596568" /><path d="M4 9.500q8-8 16 0M7.500 13q4.500-4 9 0" /><circle cx="12" cy="15.500" r="1.700" fill="#fff" stroke="none" /></svg>
      <svg class="vol" width="24" height="18" viewBox="0 0 24 18" fill="none" stroke="#fff" stroke-width="1.500"><path d="M1 6v6h3.500L10 17V1L4.500 6zM14 5l8 8m0-8-8 8" /></svg>
      <svg class="bat" width="25" height="17" viewBox="0 0 25 17"><rect x="1" y="1" width="20" height="15" rx="3" fill="none" stroke="#fff" stroke-width="1.700" /><path d="M3.500 4h5v9h-5zM22 5.500q3 0 3 3t-3 3z" fill="#fff" /></svg>
      <div class="clock"><span>8:11 AM</span><span>6/2/2025</span></div>
    </div>
  </footer>
</div>

<style>
  :global(body) { margin: 0; overflow: hidden; }
  .screen { width: 1920px; height: 1080px; overflow: hidden; display: flex; flex-direction: column; background: #0c2228; font-family: "Liberation Sans", Arial, sans-serif; }
  * { box-sizing: border-box; }
  svg { display: block; flex: none; }
  em { font-style: normal; }

  .tabstrip { height: 60px; flex: none; display: flex; align-items: center; background: #0c2228; padding-left: 9px; }
  .tabsearch { width: 42px; height: 42px; border-radius: 14px; background: #283c42; display: grid; place-items: center; margin-right: 4.5px; }
  .tab { width: 45px; height: 24px; flex: none; display: flex; justify-content: center; border-right: 2px solid #283c42; padding-left: 2px; }
  .tab.step { width: 44px; padding-left: 2.500px; }
  .tab.narrow { width: 43.5px; }
  .tab.last { border-color: transparent; }
  .fav { width: 24px; height: 24px; }
  .ps { font: bold 15px "Liberation Sans", sans-serif; fill: #4b93c9; }
  .tk { font: bold 6.5px "Liberation Sans", sans-serif; fill: #fff; }
  .active { width: 78px; height: 60px; margin-left: -11px; display: flex; align-items: flex-end; }
  .plus { margin-left: 7px; }
  .wincontrols { margin-left: auto; display: flex; gap: 53px; padding-right: 26px; }

  .toolbar { height: 71px; flex: none; background: #283c42; border-bottom: 2px solid #40494c; border-radius: 12px 12px 0 0; display: flex; align-items: center; }
  .nav { width: 180px; padding-left: 23px; display: flex; gap: 34px; }
  .omnibox { width: 1482px; height: 51px; border-radius: 26px; background: #12292f; display: flex; align-items: center; padding: 0 24px 0 8px; }
  .siteinfo { width: 36px; height: 36px; border-radius: 50%; background: #283c42; display: grid; place-items: center; }
  .url { margin-left: 11px; padding-bottom: 2px; font: 20.5px "Noto Sans", "Open Sans", sans-serif; color: #e3eff2; letter-spacing: -0.35px; }
  .url i { font-style: normal; color: #bac6c9; }
  .mag { margin-left: auto; margin-right: 25px; }
  .verify { width: 178px; height: 50px; margin: 0 31px 0 13px; border-radius: 25px; background: #004f5d; display: flex; align-items: center; padding-left: 16px; gap: 9px; color: #c9edf5; font: 18.5px "Noto Sans", sans-serif; letter-spacing: -0.6px; white-space: nowrap; }
  .verify span { padding-bottom: 2px; }

  .eda { height: 51px; flex: none; display: flex; background: linear-gradient(#02519f, #02386d); border-bottom: 1px solid #012142; }
  .logo-eda { font: 28px "Open Sans", sans-serif; fill: #174f88; stroke: #174f88; stroke-width: .7; }
  .logo-play { font: 900 25px Lato, sans-serif; fill: #fff; stroke: #fff; stroke-width: .5; }
  .btns { display: flex; gap: 2px; }
  button { height: 50px; border: 1px solid #2e6da4; border-radius: 5px; background: #337ab7; color: #fff; font: 16.8px "Liberation Sans", Arial, sans-serif; padding: 0; display: flex; align-items: center; white-space: nowrap; }
  .b-new { width: 55px; padding-left: 12px; }
  .b-run { width: 52px; padding-left: 12px; }
  .b-save { width: 74px; padding-left: 7px; gap: 4px; }
  .b-copy { width: 77px; padding-left: 7px; gap: 3px; }
  .prev { margin-left: 230px; width: 16px; color: #fff; display: flex; flex-direction: column; }
  .prev span { font-size: 8px; font-weight: bold; line-height: 10px; margin-top: 5px; white-space: nowrap; letter-spacing: -.3px; }
  .prev b { font-size: 14px; line-height: 14px; margin-top: 1px; }
  .next { width: 26px; color: #fff; font-weight: bold; font-size: 14px; line-height: 45px; padding-left: 11px; }
  .know { font: bold 24px "Open Sans", sans-serif; }
  .wk { font: bold 13.5px "Open Sans", sans-serif; fill: #f26430; }
  .b1 { font: bold 16px "Open Sans", sans-serif; fill: #f4f9fb; }
  .b2 { font: bold 14px "Open Sans", sans-serif; fill: #f4f9fb; }
  .b3 { font: bold 14px "Open Sans", sans-serif; fill: #71c7ed; }
  .b4 { font: bold 17.5px "Open Sans", sans-serif; fill: #fff; }
  button em { width: 0; height: 0; border: 4px solid transparent; border-top-color: #fff; border-bottom: 0; margin-left: 5px; margin-top: 2px; }
  .r1 { width: 108px; padding-left: 7px; }
  .r2 { width: 121px; padding-left: 15px; }
  .r3 { width: 62px; padding-left: 6px; }
  .r4 { width: 145px; padding-left: 6px; }
  .r5 { width: 102px; padding-left: 6px; }
  button span { margin-left: 7.5px; }

  .page { height: 828px; flex: none; display: grid; }
  .backdrop { grid-area: 1 / 1; }
  .dimtext { font: 14px "Liberation Sans", sans-serif; }
  .big { font-size: 24px; font-weight: bold; }
  .lang { font-size: 20px; }
  .dimbold { font: bold 15px "Liberation Sans", sans-serif; }
  .modal { grid-area: 1 / 1; z-index: 1; width: 1882px; height: 810px; margin: 8px 0 0 19px; background: #fff; box-shadow: 0 0 9px rgba(0, 0, 0, .75); display: flex; flex-direction: column; border-radius: 3px 3px 0 0; }
  .mhead { height: 44px; flex: none; background: #333; border-radius: 3px 3px 0 0; display: flex; align-items: center; justify-content: space-between; padding: 0 22px 0 12px; }
  h1 { margin: 0; font-size: 19.2px; font-weight: bold; color: #fff; }
  .mbody { flex: 1; display: flex; }
  .content { flex: 1; padding: 6px 0 0 18px; }
  .range { display: flex; height: 32px; font-size: 14.4px; color: #555; }
  label { font-weight: bold; color: #333; line-height: 25px; padding-left: 2px; font-size: 14.4px; }
  .from { width: 75px; }
  .to { width: 102px; padding-left: 54px; margin-right: -1px; }
  .input { width: 179px; height: 26px; border: 1px solid #bbb; border-radius: 4px; background: #eee; box-shadow: inset 0 1px 1px rgba(0, 0, 0, .1); padding-left: 2px; line-height: 25px; }
  .tools { display: flex; gap: 6px; height: 46px; font-size: 16.8px; color: #333; }
  .group { display: flex; height: 36px; border: 1px solid #ccc; border-radius: 4px; }
  .group span { display: flex; align-items: center; justify-content: center; flex: 1; border-left: 1px solid #ccc; }
  .group span:first-child { border-left: 0; }
  .g1 { width: 204px; }
  .g1 span:first-child { flex: none; width: 115px; padding-left: 1px; }
  .g1 em { border: 5px solid transparent; border-top: 6px solid #333; border-bottom: 0; margin-left: 5px; }
  .g2 { width: 165px; }
  .g2 span { flex: none; width: 45px; }
  .g2 span:last-child { flex: 1; }
  .g3 { width: 91px; }
  .g4 { width: 137px; border-color: #e3e3e3; }
  .g4 span { border-color: #e3e3e3; }
  .g4 span:last-child { flex: none; width: 43px; }
  .empty { width: 31px; height: 12px; border: 1px solid #e3e3e3; border-radius: 4px; }
  .tick { font: 13.3px "DejaVu Sans Mono", monospace; fill: #ff0; stroke: #ff0; stroke-width: .2; }
  .sig { font: 13.3px "DejaVu Sans Mono", monospace; fill: #fff; stroke: #fff; stroke-width: .3; }
  p { margin: 9px 0 0; font-size: 14.3px; line-height: 20px; color: #333; }
  .scroll { width: 22px; background: #fcfcfc; display: flex; flex-direction: column; align-items: center; padding: 6px 2px 5px 0; }
  .thumb { width: 13px; height: 707px; border-radius: 7px; background: #8b8b8b; margin: 8px 0 auto; }

  .taskbar { height: 70px; flex: none; background: linear-gradient(90deg, #1f2628, #17282d 20%, #1b2729 40%, #1e2527 65%, #16282d 90%, #14272c); display: flex; align-items: center; color: #fff; font-family: "Noto Sans", sans-serif; padding-bottom: 1px; }
  .weather { width: 322px; padding-left: 28px; align-self: flex-start; padding-top: 8px; }
  .badge1 { font: 16px "Noto Sans", sans-serif; fill: #111; }
  .search { width: 330px; height: 48px; margin: 0 3px 0 20px; border-radius: 24px; background: #384245; border: 1px solid #4d5658; display: flex; align-items: center; padding: 0 7px 0 16px; font-size: 19px; color: #d5dadb; }
  .search span { margin-left: 15px; }
  .dino { margin-left: auto; }
  .apps { display: flex; }
  .app { width: 66px; height: 60px; display: grid; place-items: center; position: relative; border-radius: 6px; }
  .app svg { width: 36px; height: 36px; overflow: visible; }
  .app.on { width: 60px; margin: 0 3px; background: #2b3437; border: 1px solid #363f42; }
  .bar { position: absolute; bottom: 0; left: calc(50% - 12px); width: 24px; height: 5px; border-radius: 3px; background: #6fd3dc; }
  .dot { width: 9px; left: 28px; background: #9a9fa1; }
  .count { position: absolute; left: 31px; top: 4px; width: 31px; height: 25px; border-radius: 13px; background: #70d3dd; color: #111; font-size: 16px; font-weight: normal; line-height: 25px; text-align: center; }
  .tray { margin-left: auto; display: flex; align-items: center; padding-right: 28px; font-size: 17px; line-height: 23px; }
  .tray span { display: block; }
  .cloud { margin-left: 27px; }
  .lang2 { width: 44px; margin-left: 22px; text-align: center; letter-spacing: -.2px; }
  .wifi { margin-left: 23px; }
  .vol { margin-left: 12px; }
  .bat { margin-left: 12px; }
  .clock { width: 98px; text-align: right; font-size: 17.5px; }
</style>
